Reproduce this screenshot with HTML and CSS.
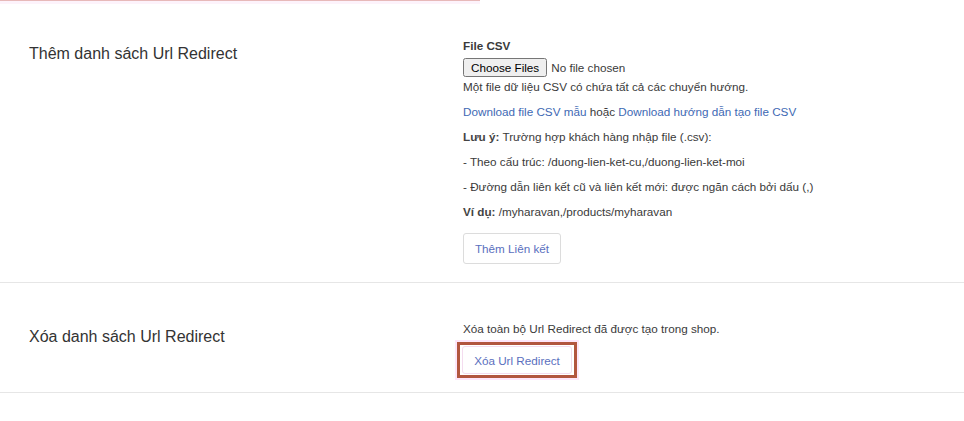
FILE: index.html
```html
<!DOCTYPE html>
<html lang="vi">
<head>
    <meta charset="UTF-8">
    <meta name="viewport" content="width=device-width, initial-scale=1.0">
    <title>Url Redirect</title>
    <link rel="stylesheet" href="styles.css">
</head>
<body>
    <div class="topline"></div>

    <div class="section section-import">
        <div class="section-title">Thêm danh sách Url Redirect</div>
        <div class="section-body">
            <label class="field-label">File CSV</label>
            <input type="file" class="file-input" multiple>
            <p class="help first">Một file dữ liệu CSV có chứa tất cả các chuyển hướng.</p>
            <p class="help"><a href="#">Download file CSV mẫu</a> hoặc <a href="#">Download hướng dẫn tạo file CSV</a></p>
            <p class="help"><strong>Lưu ý:</strong> Trường hợp khách hàng nhập file (.csv):</p>
            <p class="help">- Theo cấu trúc: /duong-lien-ket-cu,/duong-lien-ket-moi</p>
            <p class="help">- Đường dẫn liên kết cũ và liên kết mới: được ngăn cách bởi dấu (,)</p>
            <p class="help"><strong>Ví dụ:</strong> /myharavan,/products/myharavan</p>
            <button class="btn btn-add">Thêm Liên kết</button>
        </div>
    </div>

    <div class="section section-delete">
        <div class="section-title">Xóa danh sách Url Redirect</div>
        <div class="section-body">
            <p class="help first short">Xóa toàn bộ Url Redirect đã được tạo trong shop.</p>
            <div class="highlight"><button class="btn btn-delete">Xóa Url Redirect</button></div>
        </div>
    </div>
</body>
</html>
```

FILE: styles.css
```css
body {
    margin: 0;
    font-family: "Liberation Sans", Arial, sans-serif;
    font-size: 11.7px;
    color: #3a3a3a;
    background: #fff;
}
.topline {
    height: 1px;
    background: #e7b9b9;
    border-bottom: 3px solid #fdf3fb;
    width: 480px;
}
.section {
    display: grid;
    grid-template-columns: 463px 1fr;
    border-bottom: 1px solid #e6e6e6;
}
.section-import {
    padding: 33px 0 18px;
}
.section-delete {
    padding: 36px 0 14px;
}
.section-title {
    padding-left: 29px;
    font-size: 16px;
    line-height: 20px;
    color: #333;
}
.section-import .section-title {
    padding-top: 7px;
}
.section-delete .section-title {
    padding-top: 8px;
}
.field-label {
    display: block;
    font-weight: bold;
    line-height: 17px;
    margin-bottom: 4px;
}
.file-input {
    display: block;
    font-family: "Liberation Sans", Arial, sans-serif;
    font-size: 11.7px;
    margin: 0;
}
.help {
    margin: 0 0 8px;
    line-height: 17px;
}
.help.first {
    margin-top: 1px;
}
.help.short {
    margin-bottom: 5px;
}
.help strong {
    font-weight: bold;
    color: #444;
}
a {
    color: #3e69b4;
    text-decoration: none;
}
.btn {
    font-family: "Liberation Sans", Arial, sans-serif;
    font-size: 11.7px;
    color: #5a6fbe;
    background: #fff;
    border: 1px solid #dcdcdc;
    border-radius: 3px;
    cursor: pointer;
}
.btn-add {
    margin-top: 5px;
    width: 98px;
    height: 31px;
}
.highlight {
    width: fit-content;
    margin-left: -6px;
    padding: 1px 2px;
    border: 3px solid #b2563f;
    box-shadow: 0 0 0 2px #fde6fa;
    line-height: 0;
}
.btn-delete {
    width: 110px;
    height: 28px;
    border-color: #f4dcef;
}
```
